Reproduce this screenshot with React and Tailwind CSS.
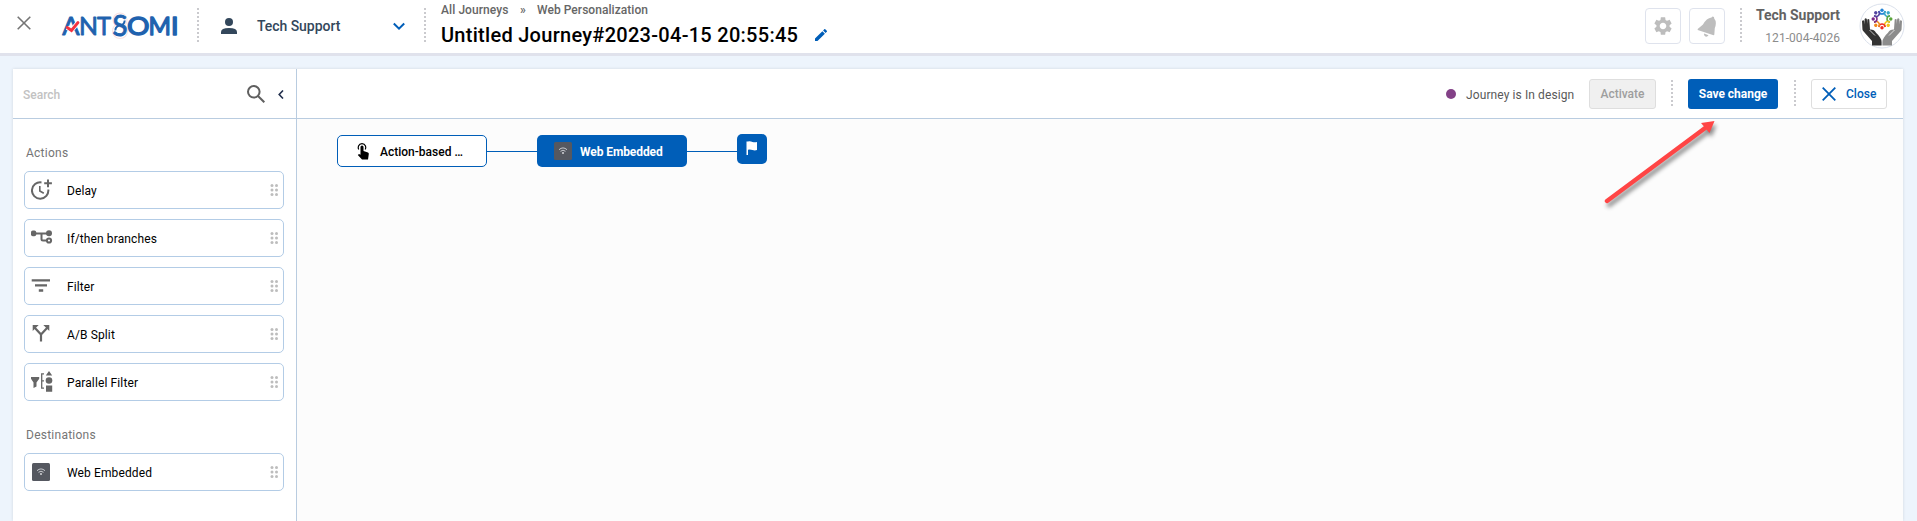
import React from "react";

function DottedLine({ className = "" }) {
  return (
    <svg className={`w-[2px] shrink-0 ${className}`} preserveAspectRatio="none">
      <line x1="1" y1="0" x2="1" y2="100%" stroke="#cacace" strokeWidth="2" strokeDasharray="2 2" />
    </svg>
  );
}

function Logo() {
  return (
    <svg className="h-[44px] w-[126px] shrink-0" viewBox="-5 -9 126 44">
      <g fill="none" stroke="#fbe3e3" strokeWidth="1.2">
        <circle cx="58" cy="7" r="7" />
        <circle cx="58" cy="18" r="7.500" />
      </g>
      <g fill="#1f62ae" stroke="#1f62ae" strokeWidth="0.9" strokeLinejoin="round" fontFamily="Lato, sans-serif" fontWeight="400" fontSize="25">
        <text x="0.300" y="22" textLength="17.300" lengthAdjust="spacingAndGlyphs">A</text>
        <text x="17" y="22" textLength="19" lengthAdjust="spacingAndGlyphs">N</text>
        <text x="35" y="22" textLength="14" lengthAdjust="spacingAndGlyphs">T</text>
        <text x="50.500" y="23" fontSize="28" textLength="15" lengthAdjust="spacingAndGlyphs">S</text>
        <g strokeWidth="1.300">
          <text x="65" y="22" textLength="22.500" lengthAdjust="spacingAndGlyphs">O</text>
          <text x="86.500" y="22" textLength="22.500" lengthAdjust="spacingAndGlyphs">M</text>
          <text x="108.800" y="22" textLength="8" lengthAdjust="spacingAndGlyphs">I</text>
        </g>
      </g>
      <path d="M62.500 7.500q.5 3-3.200 4.800M53.500 17.500q-.5-3 3.200-4.800" fill="none" stroke="#1f62ae" strokeWidth="2" />
      <path d="M5 14.700l4.500 2.800 6.500-8" fill="none" stroke="#fff" strokeWidth="4.500" />
      <path d="M5.200 14.500l4.300 3 6.500-8" fill="none" stroke="#f5333f" strokeWidth="2.800" strokeLinecap="round" />
    </svg>
  );
}

const avatarDots = [
  ["#2384d6", 0], ["#3ba8c9", 45], ["#5aa53a", 90], ["#f3c21b", 135],
  ["#ee2b24", 180], ["#f08a1d", 225], ["#7b2a86", 270], ["#5345a0", 315],
];

function Avatar() {
  return (
    <svg className="h-[46px] w-[46px] shrink-0" viewBox="0 0 46 46">
      <circle cx="23" cy="23" r="22" fill="#fff" stroke="#dbe1ec" />
      {avatarDots.map(([color, angle]) => (
        <g key={angle} transform={`rotate(${angle} 23 16)`}>
          <circle cx="23" cy="7.200" r="1.700" fill={color} />
          <path d="M19.800 8q.6 3 3.200 3T26.200 8" fill="none" stroke={color} strokeWidth="1.500" />
        </g>
      ))}
      <path d="M13 42.500v-4.600L4.200 28q-.9-1-.8-2.500L3 18q1.500-1.600 2.200 0l.4 3.500V16q1.200-1.300 2.200 0l.5 5v-4.500q1.200-1.200 2 0l.7 10q4-.3 6 3.200 2.800 2.500 4 4.800 1.500 2 1.600 4.500v3.500z" fill="#333" />
      <path d="M33 42.500v-4.600L41.800 28q.9-1 .8-2.500L43 18q-1.500-1.600-2.200 0l-.4 3.500V16q-1.200-1.300-2.200 0l-.5 5v-4.500q-1.200-1.200-2 0l-.7 10q-4-.3-6 3.200-2.800 2.500-4 4.800-1.500 2-1.600 4.500v3.500z" fill="#8c8c8c" />
      <path d="M10.500 27l5.500 5.500M35.500 27L30 32.500" stroke="#fff" strokeWidth=".7" />
    </svg>
  );
}

function WifiTile() {
  return (
    <svg className="h-[18px] w-[18px] shrink-0" viewBox="0 0 18 18">
      <rect width="18" height="18" rx="1.500" fill="#555860" />
      <g fill="none" stroke="#d4d5d8" strokeWidth=".9">
        <path d="M5 7.700q4-3.600 8 0M6.500 9.300q2.500-2.200 5 0" />
      </g>
      <circle cx="9" cy="11" r="1" fill="#d4d5d8" />
    </svg>
  );
}

function DelayIcon() {
  return (
    <svg className="h-[22px] w-[22px]" viewBox="0 0 22 22" fill="none" stroke="#666">
      <path d="M10.500 3.400A8.200 8.200 0 1 0 17.300 10.500" strokeWidth="2" />
      <path d="M8.800 7v5l4 2.300" strokeWidth="1.600" />
      <path d="M17 .500v7.700M13.200 4.300h7.700" strokeWidth="2" />
    </svg>
  );
}

function BranchIcon() {
  return (
    <svg className="h-[22px] w-[22px]" viewBox="0 0 22 22" fill="none" stroke="#666" strokeWidth="2">
      <path d="M2 6.500h16M10.500 6.500v5.500q0 1.500 1.500 1.500h4" />
      <rect x="0" y="3.500" width="5.200" height="5.800" rx="1.800" fill="#666" stroke="none" />
      <circle cx="18" cy="6.300" r="3" fill="#666" stroke="none" />
      <circle cx="18" cy="13.500" r="2.100" />
    </svg>
  );
}

function FilterIcon() {
  return (
    <svg className="h-[22px] w-[22px]" viewBox="0 0 22 22" fill="#666">
      <path d="M.700 4.200h18.300v2.400H.700zM4 9.300h12v2.200H4zM7.800 14.300h4.400v2.400H7.800z" />
    </svg>
  );
}

function SplitIcon() {
  return (
    <svg className="h-[22px] w-[22px]" viewBox="0 0 22 22" fill="none" stroke="#666" strokeWidth="2.200">
      <path d="M10 18.500v-7L3.500 4.500M10 11.500L16.500 4.500" />
      <path d="M1.700 8V2h6zM18.300 8V2h-6z" fill="#666" stroke="none" />
    </svg>
  );
}

function ParallelIcon() {
  return (
    <svg className="h-[22px] w-[22px]" viewBox="0 0 22 22" fill="#666">
      <path d="M0 6h8.200v1.800L5.500 11.500v4L2.500 17v-5.500L0 7.800z" />
      <path d="M13 2.800h-2.300v14.400H13M10.500 9.800H13" fill="none" stroke="#666" strokeWidth="1.300" />
      <path d="M18 0l3.200 4.500h-6.400zM15 14.500h6.200v6.200H15z" />
      <circle cx="18" cy="9.500" r="3.300" />
    </svg>
  );
}

function DragHandle() {
  return (
    <svg className="h-[12px] w-[8px]" viewBox="0 0 8 12" fill="#bdbdbd">
      {[1.5, 6, 10.5].map((y) => (
        <g key={y}>
          <circle cx="2" cy={y} r="1.5" />
          <circle cx="6.500" cy={y} r="1.5" />
        </g>
      ))}
    </svg>
  );
}

function Block({ icon, label }) {
  return (
    <div className="flex h-[38px] w-[260px] items-center rounded-[5px] border border-[#b3cce6] bg-white pl-[6px] pr-[5px]">
      <div className="flex w-[36px] items-center">{icon}</div>
      <span className="flex-1 pt-[2px] text-[12px] leading-[14px] tracking-[0.120px] text-black">{label}</span>
      <DragHandle />
    </div>
  );
}

function Header() {
  return (
    <header className="flex h-[56px] shrink-0 items-start border-b-[3px] border-[#e0e2ec] bg-white">
      <svg className="ml-[17px] mt-[16px] h-[14px] w-[14px] shrink-0" viewBox="0 0 14 14">
        <path d="M.700.700l12.600 12.600M13.300.700L.700 13.300" stroke="#757575" strokeWidth="1.600" />
      </svg>
      <div className="ml-[26px] mt-[4px]"><Logo /></div>
      <DottedLine className="ml-[14px] mt-[8px] h-[36px]" />
      <svg className="ml-[22px] mt-[18px] h-[16px] w-[16px] shrink-0" viewBox="0 0 16 16" fill="#33475b">
        <circle cx="8" cy="4" r="4" />
        <path d="M0 16v-2q0-4 8-4t8 4v2z" />
      </svg>
      <span className="ml-[20px] mt-[17px] w-[136px] whitespace-nowrap text-[14px] font-medium leading-[18px] tracking-[-0.050px] text-[#33475b]">Tech Support</span>
      <svg className="mt-[22px] h-[9px] w-[12px] shrink-0" viewBox="0 0 12 9">
        <path d="M.800 1.500L6 6.700l5.200-5.200" fill="none" stroke="#005eb8" strokeWidth="2" />
      </svg>
      <DottedLine className="ml-[19px] mt-[8px] h-[36px]" />
      <div className="ml-[15px] flex flex-1 flex-col">
        <div className="mt-[2px] flex text-[12px] font-medium leading-[16px] text-[#666]">
          <span className="w-[79px] tracking-[0.080px]">All Journeys</span>
          <span className="w-[17px]">»</span>
          <span className="tracking-[0.050px]">Web Personalization</span>
        </div>
        <div className="mt-[5px] flex items-start">
          <h1 className="w-[374px] whitespace-nowrap text-[20px] font-medium leading-[24px] tracking-[0.280px] text-black">Untitled Journey#2023-04-15 20:55:45</h1>
          <svg className="mt-[6px] h-[12px] w-[12px]" viewBox="3 3 18 18" fill="#005eb8">
            <path d="M3 17.250V21h3.750L17.810 9.940l-3.750-3.750L3 17.250zM20.710 7.040a1 1 0 0 0 0-1.410l-2.340-2.340a1 1 0 0 0-1.410 0l-1.830 1.830 3.750 3.750 1.830-1.830z" />
          </svg>
        </div>
      </div>
      <div className="mt-[8px] flex h-[36px] w-[36px] items-center justify-center rounded-[4px] border border-[#dfe3ed]">
        <svg className="h-[22px] w-[22px]" viewBox="0 0 24 24" fill="#bdbdbd">
          <path d="M19.140 12.940c.04-.3.060-.61.060-.94 0-.32-.02-.64-.07-.94l2.030-1.580c.18-.14.230-.41.120-.61l-1.920-3.320c-.12-.22-.37-.29-.59-.22l-2.390.96c-.5-.38-1.030-.7-1.620-.94l-.36-2.540c-.04-.24-.24-.41-.48-.41h-3.840c-.24 0-.43.17-.47.410l-.36 2.540c-.59.240-1.130.570-1.620.940l-2.390-.96c-.22-.08-.47 0-.59.220L2.740 8.870c-.12.210-.08.470.12.610l2.030 1.580c-.05.3-.09.630-.09.940s.02.640.07.940l-2.030 1.580c-.18.140-.23.410-.12.610l1.920 3.320c.12.220.37.290.59.220l2.390-.96c.5.380 1.030.7 1.620.94l.36 2.540c.05.240.24.410.48.410h3.840c.24 0 .44-.17.47-.41l.36-2.540c.59-.24 1.130-.56 1.620-.94l2.390.960c.22.080.47 0 .59-.22l1.920-3.320c.12-.22.070-.47-.12-.61l-2.010-1.580zM12 15.600c-1.980 0-3.600-1.620-3.600-3.600s1.620-3.600 3.600-3.600 3.600 1.620 3.600 3.600-1.620 3.600-3.600 3.600z" />
        </svg>
      </div>
      <div className="ml-[8px] mt-[8px] flex h-[36px] w-[36px] items-center justify-center rounded-[4px] border border-[#dfe3ed]">
        <svg className="h-[21px] w-[20px]" viewBox="0 0 20 21" fill="#bdbdbd">
          <path d="M.700 13L6 8.600Q9.500 2 14.500 1.500l1-1 1.500.6.200 1.400q3 3.500.6 9.500l-.5 6.700-.7.600L.700 14z" />
          <path d="M7 17.500l4.500 1.700q-1.200 2-3 1.300T7 17.500z" />
        </svg>
      </div>
      <DottedLine className="ml-[15px] mt-[8px] h-[36px]" />
      <div className="flex w-[98px] flex-col items-end whitespace-nowrap">
        <span className="mt-[6px] text-[14px] font-bold leading-[18px] tracking-[-0.050px] text-[#636363]">Tech Support</span>
        <span className="mt-[5px] text-[12px] leading-[18px] tracking-[0.050px] text-[#8c8c8c]">121-004-4026</span>
      </div>
      <div className="ml-[19px] mr-[12px] mt-[3px]"><Avatar /></div>
    </header>
  );
}

function Sidebar() {
  return (
    <aside className="flex w-[284px] shrink-0 flex-col border-r border-[#b9cce0] bg-white">
      <div className="flex h-[50px] shrink-0 items-center border-b border-[#b9cce0] pl-[10px]">
        <span className="w-[224px] shrink-0 pt-[2px] text-[12px] font-medium leading-[14px] text-[#c2c2c2]">Search</span>
        <svg className="h-[18px] w-[18px] shrink-0" viewBox="0 0 18 18" fill="none" stroke="#5f5f5f" strokeWidth="2">
          <circle cx="6.800" cy="6.800" r="5.800" />
          <path d="M11 11l6.300 6.300" />
        </svg>
        <svg className="ml-[13px] mt-[1px] h-[9px] w-[6px] shrink-0" viewBox="0 0 6 9">
          <path d="M5 .500L1.200 4.500 5 8.500" fill="none" stroke="#222f4d" strokeWidth="1.600" />
        </svg>
      </div>
      <div className="flex flex-col pl-[11px]">
        <h2 className="mt-[26px] pl-[2px] text-[12px] leading-[16px] tracking-[0.25px] text-[#757575]">Actions</h2>
        <div className="mt-[10px] flex flex-col gap-[10px]">
          <Block icon={<DelayIcon />} label="Delay" />
          <Block icon={<BranchIcon />} label="If/then branches" />
          <Block icon={<FilterIcon />} label="Filter" />
          <Block icon={<SplitIcon />} label="A/B Split" />
          <Block icon={<ParallelIcon />} label="Parallel Filter" />
        </div>
        <h2 className="mt-[26px] pl-[2px] text-[12px] leading-[16px] tracking-[0.25px] text-[#757575]">Destinations</h2>
        <div className="mt-[10px]">
          <Block icon={<span className="ml-px"><WifiTile /></span>} label="Web Embedded" />
        </div>
      </div>
    </aside>
  );
}

function Toolbar() {
  return (
    <div className="flex h-[50px] shrink-0 items-center justify-end border-b border-[#b9cce0] bg-white pr-[16px]">
      <span className="h-[10px] w-[10px] rounded-full bg-[#834187]" />
      <span className="ml-[10px] w-[123px] whitespace-nowrap pt-[2px] text-[12px] leading-[14px] tracking-[0.1px] text-[#595959]">Journey is In design</span>
      <button className="h-[30px] w-[67px] rounded-[3px] border border-[#dedede] bg-[#f0f0f0] text-[12px] font-medium text-[#9e9e9e]">Activate</button>
      <DottedLine className="ml-[15px] h-[28px]" />
      <button className="ml-[15px] h-[30px] w-[90px] rounded-[3px] bg-[#005eb8] text-[12px] font-bold tracking-[-0.020px] text-white">Save change</button>
      <DottedLine className="ml-[16px] h-[28px]" />
      <button className="ml-[15px] flex h-[30px] w-[76px] items-center rounded-[3px] border border-[#dedede] bg-white pl-[10px] text-[12px] font-medium text-[#005eb8]">
        <svg className="mr-[10px] h-[14px] w-[14px]" viewBox="0 0 14 14">
          <path d="M.700.700l12.600 12.600M13.300.700L.700 13.300" stroke="#005eb8" strokeWidth="1.800" />
        </svg>
        Close
      </button>
    </div>
  );
}

function Canvas() {
  return (
    <div className="relative flex flex-1 items-start bg-[#fcfcfc] pl-[40px] pt-[15px]">
      <div className="mt-px flex h-[32px] w-[150px] items-center rounded-[5px] border border-[#005eb8] bg-white pl-[18px]">
        <svg className="h-[17px] w-[15px]" viewBox="0 0 15 17">
          <path d="M4.500 8V4q0-1.500 1.500-1.500T7.500 4v4l4.500 1.500q1 .5.800 1.500l-.8 5.500H6L1.800 12l1.200-1 1.500.8z" />
          <path d="M2.700 6.500Q1.800 5 2.500 3q1-2.300 3.500-2.300T9.500 3q.7 2-.3 3.500" fill="none" stroke="#000" strokeWidth="1.200" />
        </svg>
        <span className="ml-[9px] pt-px text-[12px] font-medium leading-[14px] text-black">Action-based <span className="tracking-[-0.600px]">...</span></span>
      </div>
      <div className="mt-[17px] h-px w-[50px] bg-[#005eb8]" />
      <div className="mt-px flex h-[32px] w-[150px] items-center rounded-[5px] bg-[#005eb8] pl-[17px]">
        <WifiTile />
        <span className="ml-[8px] pt-px text-[12px] font-bold leading-[14px] tracking-[-0.080px] text-white">Web Embedded</span>
      </div>
      <div className="mt-[17px] h-px w-[50px] bg-[#005eb8]" />
      <svg className="h-[30px] w-[30px]" viewBox="0 0 30 30">
        <rect width="30" height="30" rx="5" fill="#005eb8" />
        <path d="M9.500 7.500h1.300q2.200-.7 4.700.4 2.300.9 4.500 0v8.200q-2.200.9-4.500 0-2.500-1-4.500-.3V21H9.500z" fill="#fff" />
      </svg>
      <svg className="pointer-events-none absolute left-[1299px] top-0 h-[100px] w-[130px]" viewBox="0 0 130 100">
        <g fill="#ff4545" className="drop-shadow-[2px_4px_2px_rgba(0,0,0,0.45)]">
          <path d="M11 82L109.500 8.700" stroke="#ff4545" strokeWidth="4.400" strokeLinecap="round" />
          <path d="M105 4L118.500 2l-5 12z" />
        </g>
      </svg>
    </div>
  );
}

export default function App() {
  return (
    <div className="flex h-[521px] w-full flex-col overflow-hidden bg-[#edf4fc] font-['Roboto',sans-serif]">
      <Header />
      <div className="ml-[13px] mr-[14px] mt-[13px] flex min-h-0 flex-1 shadow-[0_0_3px_rgba(0,0,0,0.12)]">
        <Sidebar />
        <main className="flex min-w-0 flex-1 flex-col">
          <Toolbar />
          <Canvas />
        </main>
      </div>
    </div>
  );
}
